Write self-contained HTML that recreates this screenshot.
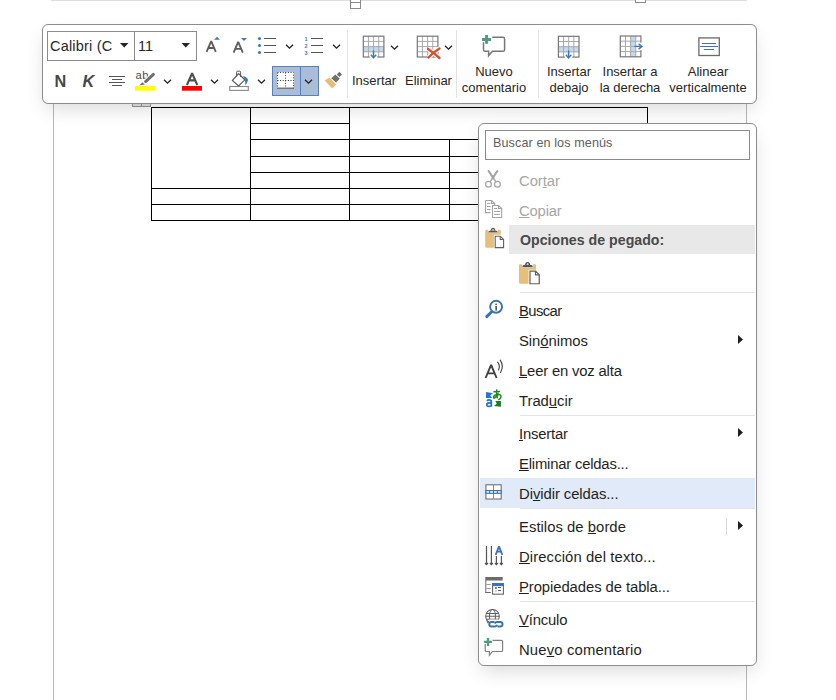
<!DOCTYPE html>
<html><head><meta charset="utf-8">
<style>
*{margin:0;padding:0;box-sizing:border-box}
html,body{width:836px;height:700px;overflow:hidden;background:#fff;font-family:"Liberation Sans",sans-serif;position:relative}
.pl{position:absolute;background:#c8c8c8}
.h{position:absolute;height:1px;background:#000}
.v{position:absolute;width:1px;background:#000}
#tb{position:absolute;left:42px;top:24px;width:715px;height:80px;border:1px solid #8c8c8c;border-radius:6px;background:#fff;box-shadow:0 8px 20px -4px rgba(0,0,0,0.16)}
#cm{position:absolute;left:478px;top:123px;width:279px;height:543px;border:1px solid #8c8c8c;border-radius:6px;background:#fff;box-shadow:0 8px 20px -4px rgba(0,0,0,0.16)}
.t{position:absolute;left:519px;white-space:nowrap;line-height:15px;font-size:14.85px;color:#1f1f1f}
.dis{color:#a6a6a6}
.lb{position:absolute;white-space:nowrap;font-size:13px;line-height:16px;color:#262626;text-align:center}
.sep{position:absolute;left:520px;width:235px;height:1px;background:#e3e3e3}
.vd{position:absolute;width:1px;background:#e3e3e3}
u{text-decoration:underline;text-decoration-thickness:1px;text-underline-offset:1px}
svg{position:absolute;left:0;top:0}
</style></head><body>
<!-- page edges -->
<div class="pl" style="left:51px;top:0;width:696px;height:1px;background:#dedede"></div>
<div class="pl" style="left:53px;top:100px;width:1px;height:600px;background:#b8b8b8"></div>
<div class="pl" style="left:746px;top:100px;width:1px;height:600px;background:#b8b8b8"></div>
<div class="pl" style="left:350px;top:-1px;width:11px;height:10px;border:1px solid #8a8a8a;background:#fff"></div><div class="pl" style="left:350px;top:2px;width:11px;height:1px;background:#8a8a8a"></div>
<div class="pl" style="left:635px;top:0;width:11px;height:3px;border:1px solid #8a8a8a;border-top:none;background:#fff"></div>

<!-- table -->
<div class="h" style="left:151px;top:107px;width:497px"></div>
<div class="h" style="left:250px;top:123px;width:100px"></div>
<div class="h" style="left:250px;top:139px;width:398px"></div>
<div class="h" style="left:250px;top:156px;width:398px"></div>
<div class="h" style="left:250px;top:172px;width:398px"></div>
<div class="h" style="left:151px;top:188px;width:497px"></div>
<div class="h" style="left:151px;top:204px;width:497px"></div>
<div class="h" style="left:151px;top:220px;width:497px"></div>
<div class="v" style="left:151px;top:107px;height:114px"></div>
<div class="v" style="left:250px;top:107px;height:114px"></div>
<div class="v" style="left:349px;top:107px;height:114px"></div>
<div class="v" style="left:449px;top:139px;height:82px"></div>
<div class="v" style="left:647px;top:107px;height:114px"></div>
<div class="pl" style="left:132px;top:102px;width:19px;height:5px;background:#e4e4e4;border:1px solid #999;border-top:none"></div><div class="pl" style="left:141px;top:103px;width:1px;height:3px;background:#999"></div>

<!-- toolbar -->
<div id="tb"></div>
<div style="position:absolute;left:47px;top:31px;width:150px;height:30px;border:1px solid #8a8a8a"></div>
<div style="position:absolute;left:134px;top:31px;width:1px;height:30px;background:#8a8a8a"></div>
<div class="lb" style="left:50px;top:38px;font-size:14.5px;color:#262626;letter-spacing:0.2px">Calibri (C</div>
<div class="lb" style="left:138px;top:38px;font-size:14.5px;color:#262626">11</div>
<div class="vd" style="left:347px;top:30px;height:68px"></div>
<div class="vd" style="left:456px;top:30px;height:68px"></div>
<div class="vd" style="left:538px;top:30px;height:68px"></div>
<div style="position:absolute;left:272px;top:66px;width:47px;height:30px;border:1px solid #5a80b8;background:#a9bcd8"></div>
<div style="position:absolute;left:300px;top:66px;width:1px;height:30px;background:#5a80b8"></div>

<div class="lb" style="left:352px;top:73px">Insertar</div>
<div class="lb" style="left:405px;top:73px">Eliminar</div>
<div class="lb" style="left:454px;top:64px;width:80px">Nuevo<br>comentario</div>
<div class="lb" style="left:529px;top:64px;width:80px">Insertar<br>debajo</div>
<div class="lb" style="left:590px;top:64px;width:80px">Insertar a<br>la derecha</div>
<div class="lb" style="left:668px;top:64px;width:80px">Alinear<br>verticalmente</div>

<!-- context menu -->
<div id="cm"></div>
<div style="position:absolute;left:485px;top:130px;width:265px;height:30px;border:1px solid #8a8a8a"></div>
<div class="t" style="left:493px;top:136px;font-size:12.6px;color:#606060;letter-spacing:0.1px">Buscar en los menús</div>
<div style="position:absolute;left:509px;top:225px;width:246px;height:29px;background:#e8e8e8"></div>
<div style="position:absolute;left:480px;top:478px;width:275px;height:30px;background:#e0eaf8"></div>

<div class="t dis" style="top:174.1px;letter-spacing:-0.08px">Cor<u>t</u>ar</div>
<div class="t dis" style="top:204.1px;letter-spacing:-0.2px"><u>C</u>opiar</div>
<div class="t" style="top:233.3px;left:520px;font-weight:bold;font-size:14.2px;color:#4a4a4a">Opciones de pegado:</div>
<div class="sep" style="top:292px"></div>
<div class="t" style="top:304.1px;letter-spacing:-0.6px"><u>B</u>uscar</div>
<div class="t" style="top:334.1px;letter-spacing:-0.04px">Sin<u>ó</u>nimos</div>
<div class="t" style="top:364.1px;letter-spacing:-0.18px"><u>L</u>eer en voz alta</div>
<div class="t" style="top:394.1px;letter-spacing:-0.03px">Trad<u>u</u>cir</div>
<div class="sep" style="top:415px"></div>
<div class="t" style="top:427.1px;letter-spacing:-0.2px"><u>I</u>nsertar</div>
<div class="t" style="top:457.1px;letter-spacing:-0.2px"><u>E</u>liminar celdas...</div>
<div class="t" style="top:487.1px;letter-spacing:-0.07px">Di<u>v</u>idir celdas...</div>
<div class="sep" style="top:508px"></div>
<div class="t" style="top:519.9px;letter-spacing:0.03px">Estilos de <u>b</u>orde</div>
<div class="t" style="top:549.9px;letter-spacing:0.1px"><u>D</u>irección del texto...</div>
<div class="t" style="top:579.9px;letter-spacing:-0.08px"><u>P</u>ropiedades de tabla...</div>
<div class="sep" style="top:601px"></div>
<div class="t" style="top:612.9px;letter-spacing:-0.17px"><u>V</u>ínculo</div>
<div class="t" style="top:642.9px;letter-spacing:0.15px">Nue<u>v</u>o comentario</div>
<div class="vd" style="left:726px;top:518px;height:17px;background:#d8d8d8"></div>

<svg width="836" height="700" viewBox="0 0 836 700">

<!-- grow / shrink font -->
<g fill="none" stroke="#5c5c5c" stroke-width="1.85" stroke-linejoin="bevel">
<path d="M206.6 51.8 L211.2 41.1 L215.8 51.8 M208.2 48 L214.2 48"/>
<path d="M233.6 52.6 L238.2 41.9 L242.8 52.6 M235.2 48.8 L241.2 48.8"/>
</g>
<path d="M214 39.8 L217 36.8 L220 39.8 Z" fill="#3c78bd"/>
<path d="M241 38 L247 38 L244 41 Z" fill="#3c78bd"/>
<!-- bullets -->
<g fill="#3f7bc0"><circle cx="259.5" cy="38.5" r="1.6"/><circle cx="259.5" cy="45.5" r="1.6"/><circle cx="259.5" cy="52.5" r="1.6"/></g>
<g stroke="#555" stroke-width="1.1"><path d="M264 38.5H276M264 45.5H276M264 52.5H276M311 38.5H323M311 45.5H323M311 52.5H323"/></g>
<g fill="#3f7bc0" font-family="Liberation Sans" font-weight="bold" font-size="5.5"><text x="304.5" y="41">1</text><text x="304.5" y="48">2</text><text x="304.5" y="55">3</text></g>
<!-- chevrons -->
<g fill="none" stroke="#222" stroke-width="1.3">
<path d="M286 44.8 L289.5 48.2 L293 44.8"/>
<path d="M333 44.8 L336.5 48.2 L340 44.8"/>
<path d="M164 79.8 L167.5 83.2 L171 79.8"/>
<path d="M211 79.8 L214.5 83.2 L218 79.8"/>
<path d="M258 79.8 L261.5 83.2 L265 79.8"/>
<path d="M305 79.8 L308.5 83.2 L312 79.8"/>
<path d="M391 45.8 L394.5 49.2 L398 45.8"/>
<path d="M445 45.8 L448.5 49.2 L452 45.8"/>
</g>
<!-- N K -->
<text x="54.5" y="86.8" font-family="Liberation Sans" font-weight="bold" font-size="16.3" fill="#474747">N</text>
<text x="82.5" y="86.8" font-family="Liberation Sans" font-weight="bold" font-style="italic" font-size="16.3" fill="#474747">K</text>
<g stroke="#555" stroke-width="1.1"><path d="M109 76.5H125M112 79.5H122M109 82.5H125M112 85.5H122"/></g>
<!-- highlighter -->
<text x="135.4" y="78.8" font-family="Liberation Sans" font-size="11.2" fill="#4a4a4a" letter-spacing="0.6">ab</text>
<path d="M145.2 82 L153.6 74.2" stroke="#fff" stroke-width="5" stroke-linecap="round"/>
<path d="M145.6 81.6 L153.4 74.4" stroke="#6e6e6e" stroke-width="3" stroke-linecap="round"/>
<path d="M142.4 82.3 L144.8 84.5 L139.2 85.6 Z" fill="#6e6e6e"/>
<rect x="135" y="86" width="20" height="4.7" fill="#ffff00"/>
<!-- font color -->
<path d="M186.9 85 L192.1 73.3 L197.3 85 M188.8 80.4 L195.4 80.4" fill="none" stroke="#505050" stroke-width="2.1" stroke-linejoin="bevel"/>
<rect x="182" y="86" width="20" height="4.7" fill="#ff0000"/>
<!-- shading -->
<rect x="229.7" y="86.5" width="18.6" height="3.9" fill="#fff" stroke="#888" stroke-width="1.1"/>
<path d="M232.4 80.4 L238.6 73.6 L244.8 79.8 L238.6 86 Z" fill="#fff" stroke="#555" stroke-width="1.1"/>
<path d="M236.6 76.5 V72.2 Q236.6 71.2 237.6 71.2 H239.6 Q240.6 71.2 240.6 72.2 V77" fill="none" stroke="#555" stroke-width="1"/>
<path d="M243 76 Q248.5 77.5 247.9 80.5 Q247 83.5 245.5 85.5 Q245.2 81 244.6 79.5 Z" fill="#3a78c3"/>
<!-- borders icon -->
<rect x="277" y="72" width="17" height="16.5" fill="#fff"/>
<g stroke="#333" stroke-width="1" stroke-dasharray="1 1.6" fill="none">
<path d="M277.5 72.5 H293.5 V88 M277.5 72.5 V88 M285.5 72.5 V88 M277.5 80.5 H293.5"/>
</g>
<path d="M277 88.2 H294" stroke="#666" stroke-width="1.3"/>
<!-- format painter -->
<path d="M324.6 80.6 L329.4 77.4 L336.2 84.4 L332.2 88.4 Z" fill="#e8bd76"/>
<path d="M331.2 78.2 L335.4 74.4 L339.8 78.8 L336 82.6 Z" fill="#707070"/>
<path d="M336.8 74.4 L339.4 71.8 L342 74.4 L339.4 77 Z" fill="#707070"/>
<!-- insert table icons -->
<g id="tbl">
</g>
<rect x="363.3" y="46.6" width="20.6" height="5.2" fill="#c4d8ee"/><g stroke="#a9a9a9" stroke-width="1"><path d="M368.45 36.2 V57.0"/><path d="M363.3 41.40 H383.90000000000003"/><path d="M373.60 36.2 V57.0"/><path d="M363.3 46.60 H383.90000000000003"/><path d="M378.75 36.2 V57.0"/><path d="M363.3 51.80 H383.90000000000003"/></g><rect x="363.3" y="36.2" width="20.6" height="20.8" fill="none" stroke="#777" stroke-width="1.2"/><rect x="369.7" y="54.5" width="7.6" height="4" fill="#fff"/><path d="M373.5 50.5 V57.8 M370.8 54.7 L373.5 57.8 L376.2 54.7" fill="none" stroke="#3c78bd" stroke-width="1.4"/><rect x="558.4" y="46.699999999999996" width="20.6" height="5.2" fill="#c4d8ee"/><g stroke="#a9a9a9" stroke-width="1"><path d="M563.55 36.3 V57.099999999999994"/><path d="M558.4 41.50 H579.0"/><path d="M568.70 36.3 V57.099999999999994"/><path d="M558.4 46.70 H579.0"/><path d="M573.85 36.3 V57.099999999999994"/><path d="M558.4 51.90 H579.0"/></g><rect x="558.4" y="36.3" width="20.6" height="20.8" fill="none" stroke="#777" stroke-width="1.2"/><rect x="564.8000000000001" y="54.599999999999994" width="7.6" height="4" fill="#fff"/><path d="M568.6 50.599999999999994 V57.89999999999999 M565.9 54.8 L568.6 57.89999999999999 L571.3000000000001 54.8" fill="none" stroke="#3c78bd" stroke-width="1.4"/><rect x="630.5999999999999" y="36.0" width="5.15" height="20.8" fill="#c4d8ee"/><g stroke="#a9a9a9" stroke-width="1"><path d="M625.45 36.0 V56.8"/><path d="M620.3 41.20 H640.9"/><path d="M630.60 36.0 V56.8"/><path d="M620.3 46.40 H640.9"/><path d="M635.75 36.0 V56.8"/><path d="M620.3 51.60 H640.9"/></g><rect x="620.3" y="36.0" width="20.6" height="20.8" fill="none" stroke="#777" stroke-width="1.2"/><rect x="638.4" y="42.6" width="4" height="7.6" fill="#fff"/><path d="M634.4 46.4 H641.9 M638.6 43.699999999999996 L641.9 46.4 L638.6 49.1" fill="none" stroke="#3c78bd" stroke-width="1.4"/><g stroke="#a9a9a9" stroke-width="1"><path d="M422.45 36.2 V57.0"/><path d="M417.3 41.40 H437.90000000000003"/><path d="M427.60 36.2 V57.0"/><path d="M417.3 46.60 H437.90000000000003"/><path d="M432.75 36.2 V57.0"/><path d="M417.3 51.80 H437.90000000000003"/></g><rect x="417.3" y="36.2" width="20.6" height="20.8" fill="none" stroke="#777" stroke-width="1.2"/>
<path d="M428 49 Q434 53 439.5 58 M428.5 57.5 Q433 52.5 439.5 48.5" fill="none" stroke="#fff" stroke-width="4.5"/>
<path d="M428 49 Q434 53 439.5 58 M428.5 57.5 Q433 52.5 439.5 48.5" fill="none" stroke="#d94f2c" stroke-width="2.4" stroke-linecap="round"/>
<!-- new comment -->
<path d="M492.2 37.3 H503 Q504.6 37.3 504.6 38.9 V49.7 Q504.6 51.3 503 51.3 H492.4 L488.6 55.8 V51.3 H485.1 Q483.5 51.3 483.5 49.7 V42.2" fill="none" stroke="#777" stroke-width="1.5"/>
<path d="M482 38 H491 V40.9 H482 Z M485.1 35 H488.1 V43.8 H485.1 Z" fill="#4f9b80"/>
<!-- align vertical -->
<rect x="698.9" y="37.9" width="20.4" height="17.6" fill="#fff" stroke="#6a6a6a" stroke-width="1.3"/>
<g stroke="#3d73b4" stroke-width="1.2" stroke-linecap="round"><path d="M702.4 43.5 H715.6 M700.6 46.5 H717.6 M704.3 49.5 H713.7"/></g>

<!-- scissors -->
<g stroke="#a3a3a3" stroke-linecap="round" fill="none">
<path d="M488.6 171 L493.4 178.2" stroke-width="2.1"/>
<path d="M497.4 171 L492.6 178.2" stroke-width="2.1"/>
<path d="M493 177.6 L490 181.8 M493 177.6 L496 181.8" stroke-width="1.3"/>
<circle cx="488.5" cy="184.3" r="2.9" stroke-width="1.2"/><circle cx="497.4" cy="184.3" r="2.9" stroke-width="1.2"/>
</g>
<!-- copy -->
<g fill="#fff" stroke="#a3a3a3" stroke-width="1.05">
<path d="M485.5 200.5 H491.6 L494.7 203.5 V205.3 M490.5 212.6 H485.5 V200.5"/>
<path d="M491.6 200.5 V203.5 H494.7" fill="none"/>
<path d="M492.5 205.5 H498.6 L501.7 208.5 V217.4 H492.5 Z"/>
<path d="M498.6 205.5 V208.5 H501.7" fill="none"/>
</g>
<g stroke="#a3a3a3" stroke-width="1.1"><path d="M487 203.5H490.5M487 206.5H490.5M487 209.5H490.5M494 208.5H497M494 211.5H500M494 214.5H500"/></g>
<g transform="translate(0 0)">
<path d="M485.2 231 Q485.2 229.8 486.4 229.8 H488.1 V233 H497.9 V229.8 H499.6 Q500.8 229.8 500.8 231 V234.8 H493.9 V247.7 H486.4 Q485.2 247.7 485.2 246.5 Z" fill="#e8bf7a"/>
<path d="M488.1 232.6 Q488.4 230.4 490.5 230.4 H495.5 Q497.6 230.4 497.9 232.6 Z" fill="#555"/>
<path d="M491.4 230.6 Q491.4 228.4 493 228.4 Q494.6 228.4 494.6 230.6" fill="none" stroke="#555" stroke-width="1.3"/>
<path d="M495.2 236.2 H500.2 L503.6 239.5 V247.6 H495.2 Z" fill="#fff" stroke="#606060" stroke-width="1.1"/>
<path d="M500.2 236.2 V239.5 H503.6" fill="none" stroke="#606060" stroke-width="1.1"/>
</g><g transform="translate(519 262.2) scale(1.1) translate(-485.2 -228)">
<path d="M485.2 231 Q485.2 229.8 486.4 229.8 H488.1 V233 H497.9 V229.8 H499.6 Q500.8 229.8 500.8 231 V234.8 H493.9 V247.7 H486.4 Q485.2 247.7 485.2 246.5 Z" fill="#e8bf7a"/>
<path d="M488.1 232.6 Q488.4 230.4 490.5 230.4 H495.5 Q497.6 230.4 497.9 232.6 Z" fill="#555"/>
<path d="M491.4 230.6 Q491.4 228.4 493 228.4 Q494.6 228.4 494.6 230.6" fill="none" stroke="#555" stroke-width="1.3"/>
<path d="M495.2 236.2 H500.2 L503.6 239.5 V247.6 H495.2 Z" fill="#fff" stroke="#606060" stroke-width="1.1"/>
<path d="M500.2 236.2 V239.5 H503.6" fill="none" stroke="#606060" stroke-width="1.1"/>
</g>
<!-- search info -->
<circle cx="496.1" cy="306.8" r="6" fill="#fff" stroke="#3a72b8" stroke-width="1.9"/>
<path d="M486.8 316.6 L491.4 312" stroke="#3a72b8" stroke-width="3" stroke-linecap="round"/>
<rect x="495.4" y="303.6" width="1.5" height="1.4" fill="#444"/>
<rect x="495.4" y="306" width="1.5" height="4.6" fill="#444"/>
<!-- read aloud -->
<path d="M485.6 378 L491.1 364.8 L496.6 378 M487.4 373.4 L494.8 373.4" fill="none" stroke="#404040" stroke-width="1.9" stroke-linejoin="bevel"/>
<path d="M497.6 362.2 Q500.6 366 498.5 369.9 M500.2 360.1 Q504.4 366.3 500.5 372.5" fill="none" stroke="#404040" stroke-width="1.1" stroke-linecap="round"/>
<!-- translate -->
<g transform="translate(482 386) scale(0.03428)">
<path d="M118 178 L322 212 L240 268 L292 348 L118 348 Z" fill="#1f74d6"/>
<path d="M140 430 Q205 380 270 430 L270 605 M270 500 Q130 470 140 560 Q160 620 270 575" fill="none" stroke="#1f74d6" stroke-width="52"/>
<g fill="none" stroke="#1f8a23" stroke-width="44" stroke-linecap="round">
<path d="M350 170 L510 158"/>
<path d="M430 120 Q415 250 445 345"/>
<path d="M470 215 Q420 330 365 350 Q330 360 340 310 Q360 250 470 245 Q560 245 555 320 Q545 380 490 395"/>
</g>
<path d="M392 438 L552 438 L552 605 L348 585 L430 520 Z" fill="#1f7a1f"/>
</g>
<!-- split cells -->
<rect x="485.9" y="484.8" width="15.3" height="14.2" fill="#fff" stroke="#707070" stroke-width="1.1"/>
<path d="M493.5 484.8 V499" stroke="#8a8a8a" stroke-width="1"/>
<rect x="485.9" y="490.6" width="15.3" height="2.7" fill="#fff" stroke="#3b74b8" stroke-width="1.2"/>
<path d="M489.6 490.6 V493.3 M493.5 490.6 V493.3 M497.4 490.6 V493.3" stroke="#3b74b8" stroke-width="1.1"/>
<!-- text direction -->
<g fill="none" stroke="#555" stroke-width="1.2">
<path d="M486.5 546 V564.4 M491.4 546 V564.4 M496.4 556 V564.4 M501.4 556 V564.4"/>
<path d="M485 563 L486.5 564.6 L488 563 M489.9 563 L491.4 564.6 L492.9 563 M494.9 563 L496.4 564.6 L497.9 563 M499.9 563 L501.4 564.6 L502.9 563"/>
</g>
<path d="M495.7 554.8 L499 546.4 L502.3 554.8 M496.9 551.6 L501.1 551.6" fill="none" stroke="#3b73b9" stroke-width="1.8" stroke-linejoin="bevel"/>
<!-- table properties -->
<rect x="485.3" y="577" width="17.4" height="3.5" fill="#6b6b6b"/>
<path d="M485.8 580 V593 M485.3 592.5 H490.8" fill="none" stroke="#6b6b6b" stroke-width="1"/>
<path d="M486.3 584.5 H490.8 M486.3 588.5 H490.8" stroke="#a0a0a0" stroke-width="1"/>
<rect x="492.6" y="583.6" width="10.8" height="10.6" fill="#fff" stroke="#666" stroke-width="1.1"/>
<rect x="492.1" y="583.1" width="11.8" height="3" fill="#3b73b9"/>
<rect x="495" y="587.2" width="1.8" height="1.6" fill="#555"/>
<rect x="495" y="590.2" width="1.8" height="1.6" fill="#ccc"/>
<path d="M498 587.5 H501 M498 590.5 H501" stroke="#555" stroke-width="1"/>
<!-- link -->
<g fill="none" stroke="#606060" stroke-width="1.05">
<circle cx="492.5" cy="616.3" r="6.8"/>
<ellipse cx="492.5" cy="616.3" rx="3" ry="6.8"/>
<path d="M486.3 613.4 H498.7 M485.7 616.3 H499.3 M486.3 619.2 H498.7"/>
</g>
<path d="M489 619.5 H505 V629 H489 Z" fill="#fff"/>
<path d="M486 620 L489 622.5 L487.6 623.5 Z" fill="#606060"/>
<g fill="none" stroke="#3a72b3" stroke-width="2">
<path d="M494.5 622 H491.5 Q489.3 622 489.3 624.3 Q489.3 626.6 491.5 626.6 H494.8 Q496.3 626.6 497.2 625"/>
<path d="M497.5 626.6 H500.3 Q502.5 626.6 502.5 624.3 Q502.5 622 500.3 622 H497 Q495.5 622 494.6 623.6"/>
</g>
<!-- new comment (menu) -->
<path d="M492.6 640.3 H501.3 Q502.6 640.3 502.6 641.6 V650.2 Q502.6 651.5 501.3 651.5 H492.3 L489.4 655.2 V651.5 H486.4 Q485.2 651.5 485.2 650.2 V644" fill="none" stroke="#808080" stroke-width="1.2"/>
<path d="M484 640.7 H492 V643.1 H484 Z M486.8 638 H489.2 V646 H486.8 Z" fill="#4f9b80"/>
<!-- submenu arrows -->
<path d="M738 335 L743 339.5 L738 344 Z" fill="#1f1f1f"/>
<path d="M738 428 L743 432.5 L738 437 Z" fill="#1f1f1f"/>
<path d="M738 521 L743 525.5 L738 530 Z" fill="#1f1f1f"/>
<!-- dropdown arrows -->
<path d="M120 43 L128.5 43 L124.25 47.5 Z" fill="#262626"/>
<path d="M181.5 43 L190 43 L185.75 47.5 Z" fill="#262626"/>
</svg>
</body></html>
